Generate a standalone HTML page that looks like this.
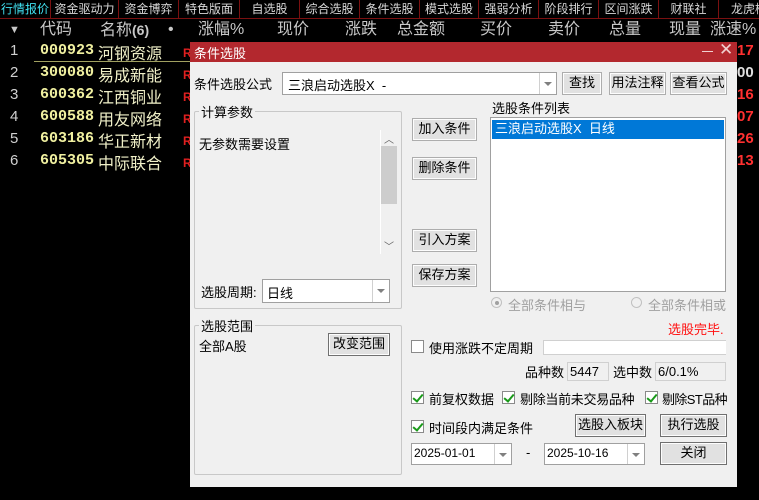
<!DOCTYPE html>
<html><head><meta charset="utf-8"><style>
*{margin:0;padding:0;box-sizing:border-box}
body{width:759px;height:500px;background:#000;position:relative;overflow:hidden;font-family:"Liberation Sans","Noto Sans CJK SC",sans-serif;font-size:13px;color:#000}
.a{position:absolute;white-space:nowrap}
.tab{position:absolute;top:0;height:19px;line-height:18px;font-size:12px;color:#d8d8d8;border-right:1px solid #7a1010;text-align:center;white-space:nowrap;overflow:hidden}
.hd{position:absolute;top:19px;font-size:16px;color:#c8c8c8;line-height:22px;white-space:nowrap}
.num{position:absolute;left:10px;color:#d0d0d0;font-size:15px}
.code{position:absolute;left:40px;color:#f0f0a0;font-weight:bold;font-size:15px;font-family:"Liberation Mono",monospace}
.nm{position:absolute;left:98px;color:#f0f0c8;font-size:16px;white-space:nowrap}
.r{position:absolute;left:183px;color:#e02020;font-size:12px;font-weight:bold}
.rr{position:absolute;left:737px;color:#ff3030;font-size:15px;font-weight:bold}
.btn{position:absolute;background:#e1e1e1;border:1px solid #adadad;box-shadow:inset 0 0 0 1px #fdfdfd;text-align:center;font-size:13px;white-space:nowrap}
.btn.d{border:1px solid #707070}
.inp{position:absolute;background:#fff;border:1px solid #a0a0a0}
.dd{position:absolute;right:0;top:0;bottom:0;width:17px;border-left:1px solid #d0d0d0}
.dd:after{content:"";position:absolute;left:4px;top:9px;border-left:4px solid transparent;border-right:4px solid transparent;border-top:4px solid #808080}
.grp{position:absolute;border:1px solid #c8c8c8;border-radius:2px}
.gl{position:absolute;background:#f0f0f0;padding:0 2px;white-space:nowrap}
.cb{position:absolute;width:13px;height:13px;border:1px solid #8a8a8a;background:#fff}
.cb.k:after{content:"";position:absolute;left:3px;top:0px;width:4px;height:8px;border-right:2px solid #1a9a1a;border-bottom:2px solid #1a9a1a;transform:rotate(40deg)}
</style></head><body>
<div class="tab" style="left:0;width:51px;color:#40e0f0">行情报价</div>
<div class="tab" style="left:51px;width:68px">资金驱动力</div>
<div class="tab" style="left:119px;width:60px">资金博弈</div>
<div class="tab" style="left:179px;width:61px">特色版面</div>
<div class="tab" style="left:240px;width:60px">自选股</div>
<div class="tab" style="left:300px;width:60px">综合选股</div>
<div class="tab" style="left:360px;width:60px">条件选股</div>
<div class="tab" style="left:420px;width:59px">模式选股</div>
<div class="tab" style="left:479px;width:60px">强弱分析</div>
<div class="tab" style="left:539px;width:60px">阶段排行</div>
<div class="tab" style="left:599px;width:60px">区间涨跌</div>
<div class="tab" style="left:659px;width:60px">财联社</div>
<div class="tab" style="left:719px;width:60px;text-align:left;padding-left:12px">龙虎榜</div>
<div class="a" style="left:0;top:18px;width:759px;height:1px;background:#7a1010"></div>
<div class="hd" style="left:9px;font-size:11px">▼</div>
<div class="hd" style="left:40px">代码</div>
<div class="hd" style="left:100px">名称<b style="font-size:14px">(6)</b></div>
<div class="hd" style="left:168px">•</div>
<div class="hd" style="left:198px">涨幅%</div>
<div class="hd" style="left:277px">现价</div>
<div class="hd" style="left:345px">涨跌</div>
<div class="hd" style="left:397px">总金额</div>
<div class="hd" style="left:480px">买价</div>
<div class="hd" style="left:548px">卖价</div>
<div class="hd" style="left:609px">总量</div>
<div class="hd" style="left:669px">现量</div>
<div class="hd" style="left:710px">涨速%</div>
<div class="num" style="top:42px">1</div><div class="code" style="top:42px">000923</div><div class="nm" style="top:40px">河钢资源</div><div class="r" style="top:46px">R</div><div class="rr" style="top:42px">17</div>
<div class="a" style="left:34px;top:61px;width:156px;height:1px;background:#a0a060"></div>
<div class="num" style="top:64px">2</div><div class="code" style="top:64px">300080</div><div class="nm" style="top:62px">易成新能</div><div class="r" style="top:68px">R</div><div class="rr" style="top:64px;color:#e0e0e0">00</div>
<div class="num" style="top:86px">3</div><div class="code" style="top:86px">600362</div><div class="nm" style="top:84px">江西铜业</div><div class="r" style="top:90px">R</div><div class="rr" style="top:86px">16</div>
<div class="num" style="top:108px">4</div><div class="code" style="top:108px">600588</div><div class="nm" style="top:106px">用友网络</div><div class="r" style="top:112px">R</div><div class="rr" style="top:108px">07</div>
<div class="num" style="top:130px">5</div><div class="code" style="top:130px">603186</div><div class="nm" style="top:128px">华正新材</div><div class="r" style="top:134px">R</div><div class="rr" style="top:130px">26</div>
<div class="num" style="top:152px">6</div><div class="code" style="top:152px">605305</div><div class="nm" style="top:150px">中际联合</div><div class="r" style="top:156px">R</div><div class="rr" style="top:152px">13</div>

<div class="a" style="left:190px;top:42px;width:547px;height:445px;background:#f0f0f0"></div>
<div class="a" style="left:190px;top:42px;width:547px;height:20px;background:#b3282e"></div>
<div class="a" style="left:194px;top:43px;color:#fff;font-size:13px">条件选股</div>
<div class="a" style="left:702px;top:51px;width:11px;height:1px;background:#f0d0d0"></div>
<div class="a" style="left:719px;top:40px;color:#f0d0d0;font-size:17px">✕</div>

<div class="a" style="left:194px;top:74px">条件选股公式</div>
<div class="inp" style="left:282px;top:72px;width:275px;height:23px"><span class="a" style="left:5px;top:2px">三浪启动选股X&nbsp; -</span><div class="dd"></div></div>
<div class="btn" style="left:562px;top:72px;width:40px;height:23px;line-height:20px">查找</div>
<div class="btn" style="left:609px;top:72px;width:57px;height:23px;line-height:20px">用法注释</div>
<div class="btn" style="left:670px;top:72px;width:57px;height:23px;line-height:20px">查看公式</div>

<div class="grp" style="left:194px;top:111px;width:208px;height:198px"></div>
<div class="gl" style="left:199px;top:102px">计算参数</div>
<div class="a" style="left:199px;top:134px">无参数需要设置</div>
<div class="a" style="left:380px;top:130px;width:17px;height:124px;background:#f0f0f0;border-left:1px solid #fff"></div>
<div class="a" style="left:381px;top:146px;width:16px;height:58px;background:#cdcdcd"></div>
<div class="a" style="left:384px;top:131px;font-size:10px;color:#606060">︿</div>
<div class="a" style="left:384px;top:238px;font-size:10px;color:#606060">﹀</div>
<div class="a" style="left:201px;top:282px">选股周期:</div>
<div class="inp" style="left:262px;top:279px;width:128px;height:24px"><span class="a" style="left:4px;top:3px">日线</span><div class="dd"></div></div>

<div class="btn" style="left:412px;top:118px;width:65px;height:23px;line-height:20px">加入条件</div>
<div class="btn" style="left:412px;top:157px;width:65px;height:23px;line-height:20px">删除条件</div>
<div class="btn" style="left:412px;top:229px;width:65px;height:23px;line-height:20px">引入方案</div>
<div class="btn" style="left:412px;top:264px;width:65px;height:23px;line-height:20px">保存方案</div>

<div class="a" style="left:492px;top:98px">选股条件列表</div>
<div class="inp" style="left:490px;top:117px;width:236px;height:175px"></div>
<div class="a" style="left:492px;top:120px;width:232px;height:19px;background:#0078d7;color:#fff;padding-left:3px;line-height:18px">三浪启动选股X&nbsp; 日线</div>
<div class="a" style="left:491px;top:297px;width:11px;height:11px;border-radius:50%;border:1px solid #c0c0c0;background:#f0f0f0"><div class="a" style="left:3px;top:3px;width:4px;height:4px;border-radius:50%;background:#a0a0a0"></div></div>
<div class="a" style="left:508px;top:295px;color:#a0a0a0">全部条件相与</div>
<div class="a" style="left:631px;top:297px;width:11px;height:11px;border-radius:50%;border:1px solid #c0c0c0;background:#f0f0f0"></div>
<div class="a" style="left:648px;top:295px;color:#a0a0a0">全部条件相或</div>
<div class="a" style="left:668px;top:319px;color:#ff1010">选股完毕.</div>

<div class="grp" style="left:194px;top:325px;width:208px;height:150px"></div>
<div class="gl" style="left:199px;top:316px">选股范围</div>
<div class="a" style="left:199px;top:336px">全部A股</div>
<div class="btn d" style="left:328px;top:333px;width:62px;height:23px;line-height:20px">改变范围</div>

<div class="cb" style="left:411px;top:340px"></div>
<div class="a" style="left:429px;top:338px">使用涨跌不定周期</div>
<div class="a" style="left:543px;top:340px;width:183px;height:15px;background:#fff;border:1px solid #d0d0d0;border-right:none"></div>
<div class="a" style="left:525px;top:362px">品种数</div>
<div class="a" style="left:567px;top:362px;width:42px;height:19px;border:1px solid #d0d0d0;padding-left:2px;line-height:17px">5447</div>
<div class="a" style="left:613px;top:362px">选中数</div>
<div class="a" style="left:655px;top:362px;width:71px;height:19px;border:1px solid #d0d0d0;padding-left:2px;line-height:17px">6/0.1%</div>

<div class="cb k" style="left:411px;top:391px"></div><div class="a" style="left:429px;top:389px">前复权数据</div>
<div class="cb k" style="left:502px;top:391px"></div><div class="a" style="left:520px;top:389px;letter-spacing:-0.3px">剔除当前未交易品种</div>
<div class="cb k" style="left:645px;top:391px"></div><div class="a" style="left:662px;top:389px;letter-spacing:-0.6px">剔除ST品种</div>
<div class="cb k" style="left:411px;top:420px"></div><div class="a" style="left:429px;top:418px">时间段内满足条件</div>
<div class="btn d" style="left:575px;top:414px;width:71px;height:23px;line-height:20px">选股入板块</div>
<div class="btn d" style="left:660px;top:414px;width:67px;height:23px;line-height:20px">执行选股</div>
<div class="inp" style="left:411px;top:443px;width:101px;height:22px"><span class="a" style="left:2px;top:2px;font-size:12px">2025-01-01</span><div class="dd"></div></div>
<div class="a" style="left:526px;top:445px">-</div>
<div class="inp" style="left:544px;top:443px;width:101px;height:22px"><span class="a" style="left:2px;top:2px;font-size:12px">2025-10-16</span><div class="dd"></div></div>
<div class="btn d" style="left:660px;top:442px;width:67px;height:23px;line-height:20px">关闭</div>
</body></html>
